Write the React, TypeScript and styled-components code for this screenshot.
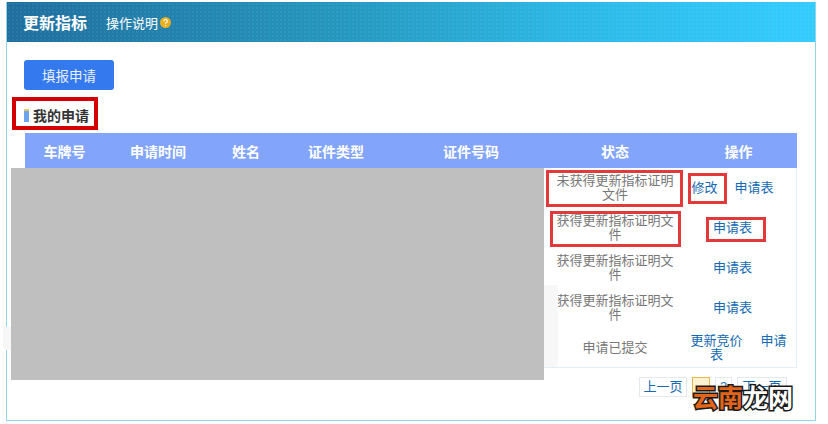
import React from 'react';
import styled, { createGlobalStyle } from 'styled-components';

const GlobalStyle = createGlobalStyle`
  html, body {
    margin: 0;
    padding: 0;
    background: #fff;
    font-family: "Liberation Sans", "Noto Sans CJK SC", sans-serif;
  }
`;

const Page = styled.div`
  position: relative;
  width: 828px;
  height: 424px;
  padding: 2px 0 0 6px;
  box-sizing: border-box;
  overflow: hidden;
`;

const Frame = styled.div`
  width: 810px;
  height: 419px;
  box-sizing: border-box;
  border: 1px solid #8fd6ea;
  border-top: 0;
`;

const Header = styled.div`
  display: flex;
  align-items: center;
  height: 40px;
  padding-left: 16px;
  color: #fff;
  background:
    radial-gradient(rgba(255, 255, 255, 0.06) 1px, transparent 1px) 0 0 / 4px 4px,
    linear-gradient(to right, #1f6e9e 0%, #2596bd 40%, #2cb8e6 70%, #33ccff 100%);
`;

const Title = styled.h1`
  margin: 0 19px 0 0;
  font-size: 16px;
  font-weight: 700;
`;

const Help = styled.span`
  display: flex;
  align-items: center;
  gap: 2px;
  font-size: 13px;
`;

const Content = styled.div`
  padding: 18px 17px 0 17px;
`;

const FillButton = styled.button`
  display: block;
  width: 90px;
  height: 30px;
  padding: 0;
  border: 0;
  border-radius: 3px;
  background: #3579ef;
  color: #e8f0ff;
  font-family: inherit;
  font-size: 13.5px;
`;

const SectionTitle = styled.div`
  display: flex;
  align-items: center;
  gap: 4px;
  height: 20px;
  margin-top: 15px;
  color: #333;
  font-size: 14px;
  font-weight: 700;
`;

const Marker = styled.i`
  width: 5px;
  height: 13px;
  background: linear-gradient(to bottom, #e8c860 0 2px, #6ea4ee 2px);
`;

const Table = styled.div`
  width: 772px;
  margin: 8px 0 0 1px;
`;

const HeadRow = styled.div`
  display: grid;
  grid-template-columns: 79px 108px 68px 112px 158px 130px 117px;
  align-items: center;
  height: 35px;
  background: #82a5fb;
  color: #fff;
  font-size: 14px;
  font-weight: 700;
  text-align: center;
`;

const Rows = styled.div`
  border-right: 1px solid #e6eef5;
  border-bottom: 1px solid #e6eef5;
`;

const Row = styled.div`
  display: grid;
  grid-template-columns: 525px 130px 116px;
  align-items: center;
  height: 40px;
  &:last-child {
    height: 39px;
  }
`;

const StatusCell = styled.div`
  grid-column: 2;
  padding: 0 6px;
  color: #777;
  font-size: 13px;
  line-height: 14px;
  text-align: center;
`;

const OpsCell = styled.div<{ $wide?: boolean }>`
  display: flex;
  align-items: center;
  justify-content: center;
  gap: 17px;
  padding-right: ${(p) => (p.$wide ? '0' : '11px')};
`;

const OpLink = styled.a<{ $wrap?: boolean }>`
  color: #1468b4;
  font-size: 13px;
  line-height: 14px;
  text-align: center;
  max-width: ${(p) => (p.$wrap ? '54px' : 'none')};
`;

const TopLink = styled(OpLink)`
  align-self: flex-start;
`;

const Pager = styled.div`
  display: flex;
  gap: 5px;
  margin: 9px 0 0 615px;
`;

const PageBtn = styled.span<{ $active?: boolean; $w: number }>`
  display: block;
  width: ${(p) => p.$w}px;
  height: 20px;
  box-sizing: border-box;
  border: 1px solid ${(p) => (p.$active ? '#e8b850' : '#e3e9ef')};
  background: ${(p) => (p.$active ? '#fdf3d0' : '#fff')};
  color: #1468b4;
  font-size: 13px;
  line-height: 18px;
  text-align: center;
`;

// covered-up part of the table
const Redaction = styled.div`
  position: absolute;
  left: 11px;
  top: 168px;
  width: 533px;
  height: 212px;
  background: #bfbfbf;
`;

const Smudge = styled.div<{ $l: number; $t: number; $w: number; $h: number }>`
  position: absolute;
  left: ${(p) => p.$l}px;
  top: ${(p) => p.$t}px;
  width: ${(p) => p.$w}px;
  height: ${(p) => p.$h}px;
  background: #f7f7f7;
  border-radius: 3px;
`;

const RedBox = styled.div<{ $l: number; $t: number; $w: number; $h: number; $dark?: boolean }>`
  position: absolute;
  left: ${(p) => p.$l}px;
  top: ${(p) => p.$t}px;
  width: ${(p) => p.$w}px;
  height: ${(p) => p.$h}px;
  box-sizing: border-box;
  border: ${(p) => (p.$dark ? '4px solid #d40000' : '3px solid #e23a3a')};
`;

const Watermark = styled.div`
  position: absolute;
  left: 693px;
  top: 380px;
  font-family: "Noto Sans CJK SC", sans-serif;
  font-size: 25px;
  font-weight: 700;
  line-height: 32px;
  white-space: nowrap;
  paint-order: stroke fill;
  -webkit-text-stroke: 3px #1a1a1a;
`;

const Orange = styled.span`
  color: #e2651a;
`;

const White = styled.span`
  color: #fff;
`;

const HelpIcon = () => (
  <svg width="11" height="11" viewBox="0 0 11 11">
    <circle cx="5.5" cy="5.5" r="5.5" fill="#e8b020" />
    <path d="M3.8 4.2a1.8 1.6 0 1 1 2.6 1.4c-.6.3-.9.6-.9 1.2" fill="none" stroke="#fff" strokeWidth="1.1" />
    <circle cx="5.5" cy="8.6" r=".7" fill="#fff" />
  </svg>
);

const columns = ['车牌号', '申请时间', '姓名', '证件类型', '证件号码', '状态', '操作'];

const App: React.FC = () => (
  <>
    <GlobalStyle />
    <Page>
      <Frame>
        <Header>
          <Title>更新指标</Title>
          <Help>
            操作说明
            <HelpIcon />
          </Help>
        </Header>
        <Content>
          <FillButton>填报申请</FillButton>
          <SectionTitle>
            <Marker />
            我的申请
          </SectionTitle>
          <Table>
            <HeadRow>
              {columns.map((c) => (
                <span key={c}>{c}</span>
              ))}
            </HeadRow>
            <Rows>
              <Row>
                <StatusCell>未获得更新指标证明文件</StatusCell>
                <OpsCell>
                  <OpLink>修改</OpLink>
                  <OpLink>申请表</OpLink>
                </OpsCell>
              </Row>
              <Row>
                <StatusCell>获得更新指标证明文件</StatusCell>
                <OpsCell>
                  <OpLink>申请表</OpLink>
                </OpsCell>
              </Row>
              <Row>
                <StatusCell>获得更新指标证明文件</StatusCell>
                <OpsCell>
                  <OpLink>申请表</OpLink>
                </OpsCell>
              </Row>
              <Row>
                <StatusCell>获得更新指标证明文件</StatusCell>
                <OpsCell>
                  <OpLink>申请表</OpLink>
                </OpsCell>
              </Row>
              <Row>
                <StatusCell>申请已提交</StatusCell>
                <OpsCell $wide>
                  <OpLink $wrap>更新竞价表</OpLink>
                  <TopLink>申请</TopLink>
                </OpsCell>
              </Row>
            </Rows>
          </Table>
          <Pager>
            <PageBtn $w={48}>上一页</PageBtn>
            <PageBtn $w={18} $active />
            <PageBtn $w={17}>2</PageBtn>
            <PageBtn $w={50}>下一页</PageBtn>
          </Pager>
        </Content>
      </Frame>
      <Smudge $l={3} $t={327} $w={10} $h={23} />
      <Smudge $l={544} $t={285} $w={14} $h={82} />
      <Redaction />
      <RedBox $dark $l={12} $t={97} $w={86} $h={33} />
      <RedBox $l={546} $t={170} $w={137} $h={37} />
      <RedBox $l={688} $t={173} $w={39} $h={31} />
      <RedBox $l={550} $t={211} $w={131} $h={36} />
      <RedBox $l={706} $t={217} $w={60} $h={25} />
      <Watermark>
        <Orange>云南</Orange>
        <White>龙网</White>
      </Watermark>
    </Page>
  </>
);

export default App;
